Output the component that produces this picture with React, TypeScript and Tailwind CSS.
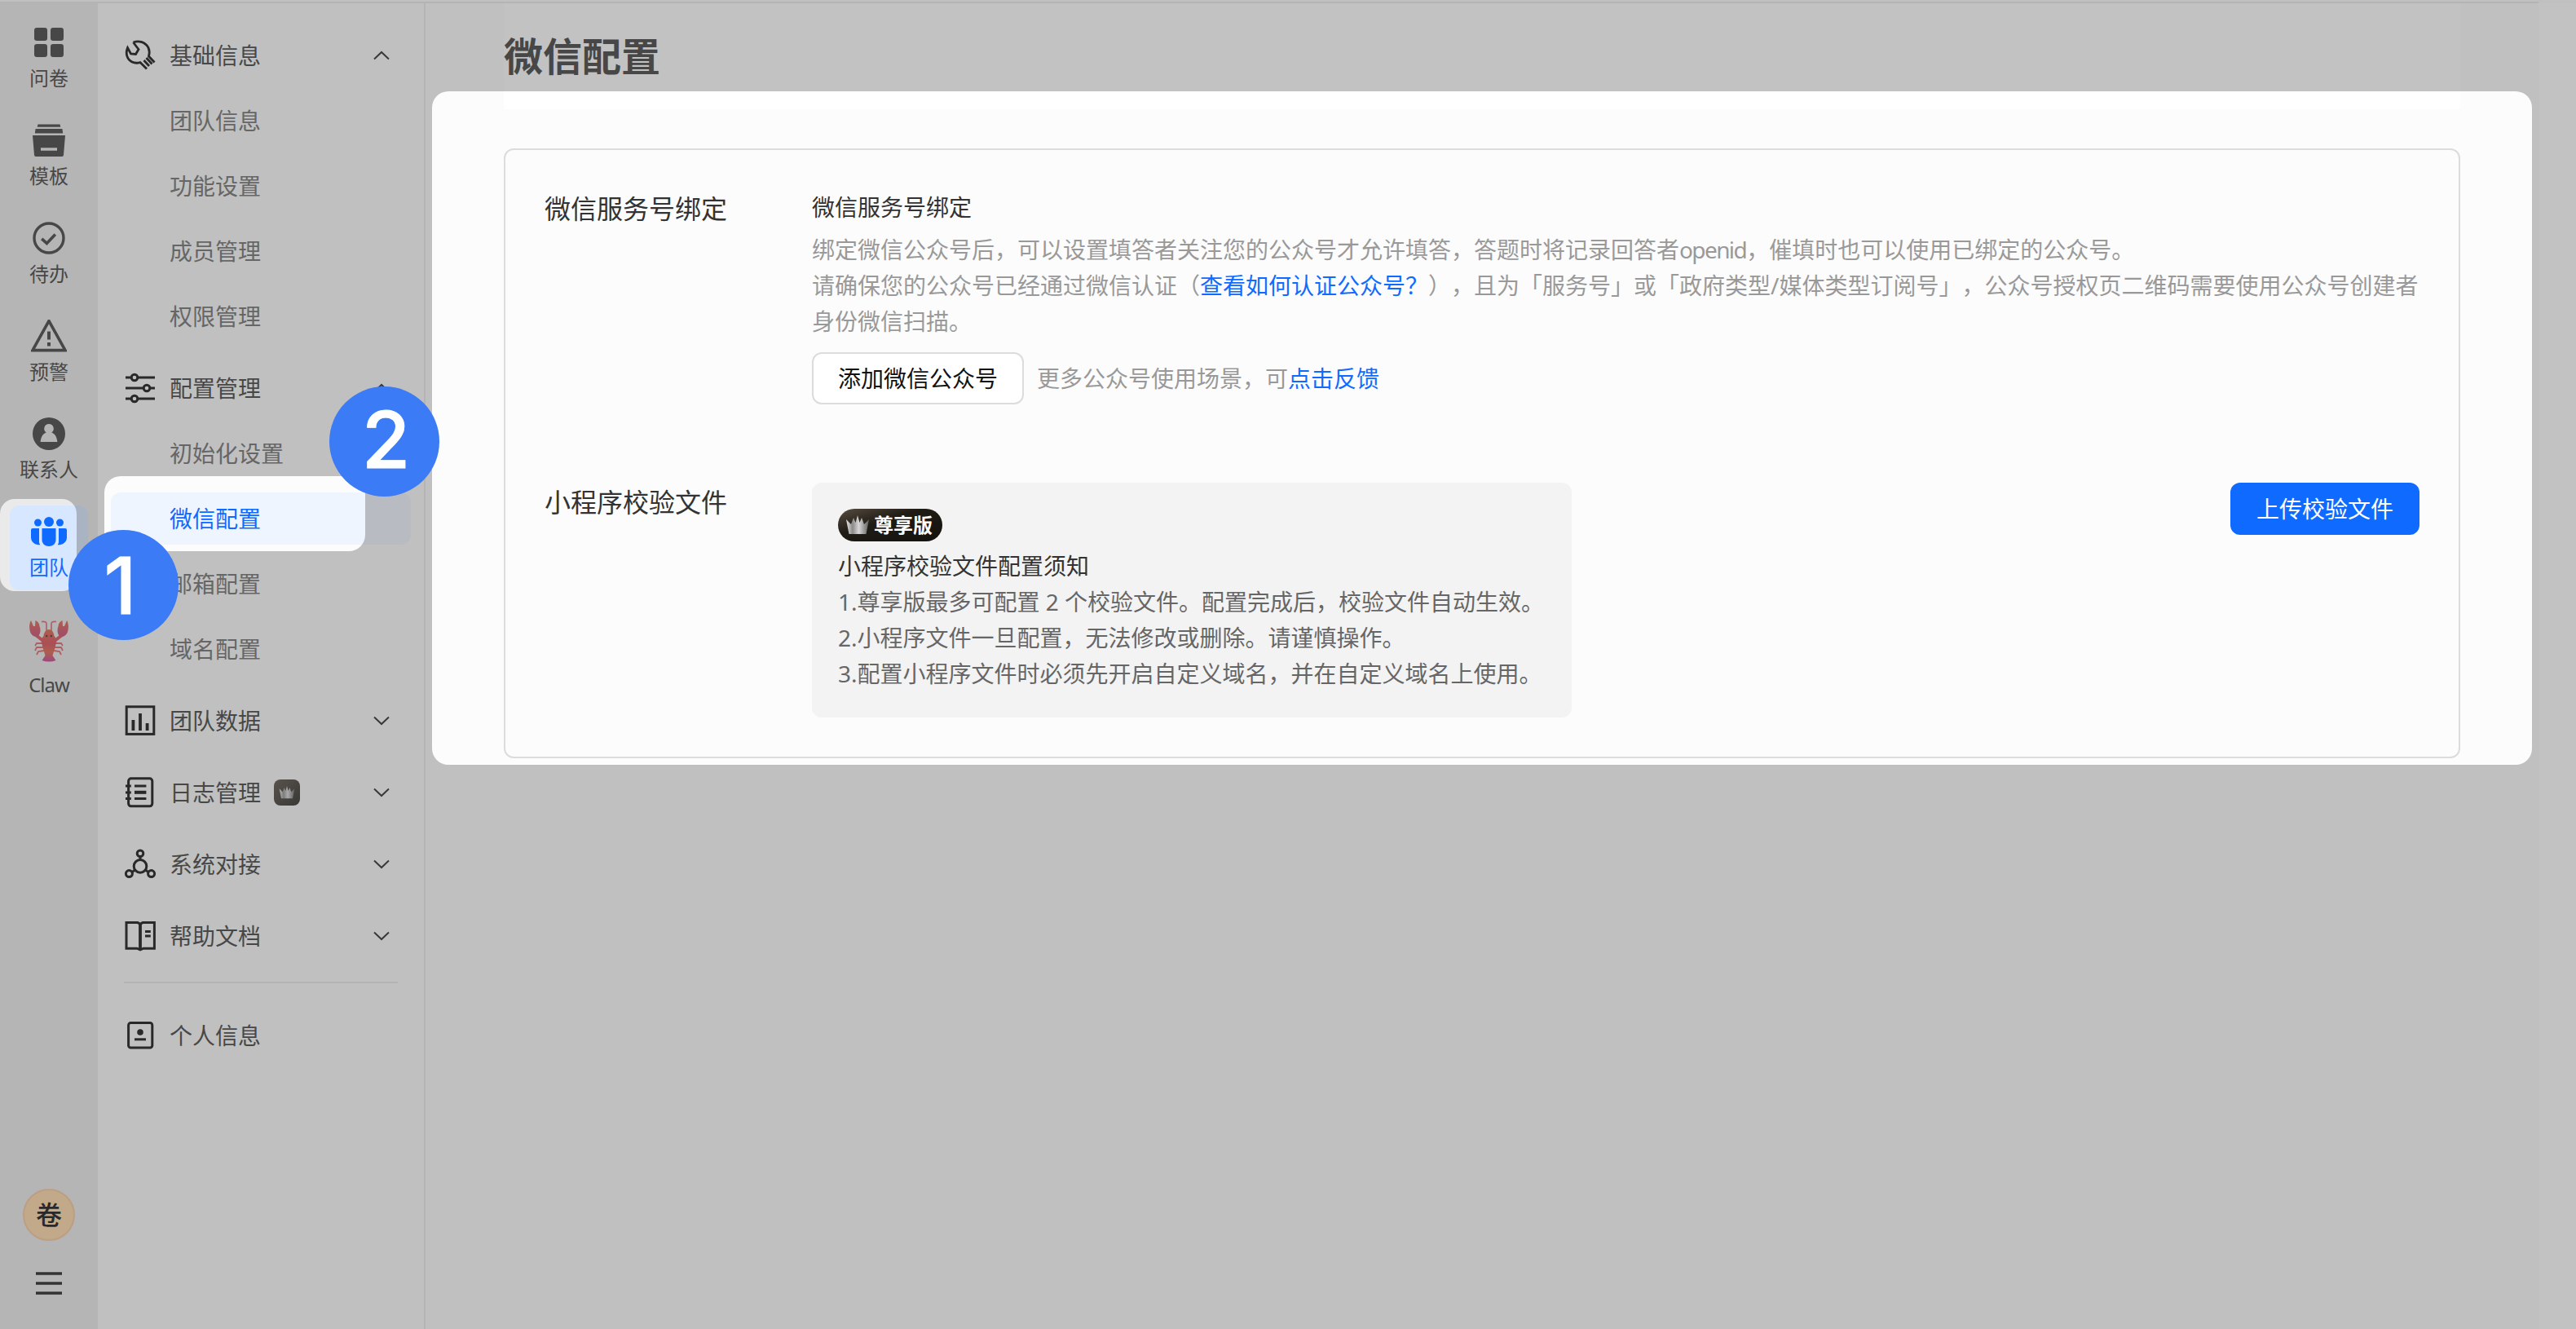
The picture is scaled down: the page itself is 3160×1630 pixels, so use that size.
import type { ReactNode } from 'react';

type MenuGroup = {
  label: string;
  icon: ReactNode;
  open?: boolean;
  vip?: boolean;
  items?: string[];
};

const stroke = {
  fill: 'none',
  stroke: 'currentColor',
  strokeWidth: 1.5,
} as const;

function Icon({ children, className = 'size-10' }: { children: ReactNode; className?: string }) {
  return (
    <svg viewBox="0 0 20 20" className={className}>
      {children}
    </svg>
  );
}

const SurveyIcon = (
  <Icon>
    <rect x="1" y="1" width="8" height="8" rx="1.6" fill="currentColor" />
    <rect x="11" y="1" width="8" height="8" rx="1.6" fill="currentColor" />
    <rect x="1" y="11" width="8" height="8" rx="1.6" fill="currentColor" />
    <rect x="11" y="11" width="8" height="8" rx="1.6" fill="currentColor" />
  </Icon>
);

const TemplateIcon = (
  <Icon>
    <path d="M3.2 0.3h13.6l.3 1.6H2.9z" fill="currentColor" />
    <path d="M1.8 3h16.4l.4 2.8H1.4z" fill="currentColor" />
    <path d="M0 7h20l-1 12a1 1 0 0 1-1 1H2a1 1 0 0 1-1-1zM5 14.6v1.8h10v-1.8z" fillRule="evenodd" fill="currentColor" />
  </Icon>
);

const TodoIcon = (
  <Icon>
    <circle cx="10" cy="10" r="9" {...stroke} strokeWidth="1.7" />
    <path d="M5.6 10.4l3.1 2.8 5.2-5.4" {...stroke} strokeWidth="1.8" />
  </Icon>
);

const AlertIcon = (
  <Icon className="h-10 w-11">
    <path d="M10 0.8L20 18.8H0z" {...stroke} strokeWidth="1.8" />
    <path d="M10 7.2v5M10 14v2.2" {...stroke} strokeWidth="2" />
  </Icon>
);

const ContactIcon = (
  <Icon>
    <path
      d="M10 0a10 10 0 1 0 0 20a10 10 0 1 0 0-20zM10 4a2.9 2.9 0 0 1 1.6 5.3c2 .6 3.3 2.6 3.6 5.7H4.8c.3-3.1 1.6-5.1 3.6-5.7A2.9 2.9 0 0 1 10 4z"
      fillRule="evenodd"
      fill="currentColor"
    />
  </Icon>
);

const TeamIcon = (
  <svg viewBox="0 0 44 40" className="h-10 w-11" fill="currentColor">
    <circle cx="22" cy="8" r="6" />
    <circle cx="8.5" cy="9" r="4.5" />
    <circle cx="35.5" cy="9" r="4.5" />
    <path d="M13.500 16h17v14c0 5-4 8-8.500 8s-8.500-3-8.500-8z" />
    <path d="M2 16h8v17c.3 1.500.8 2.500 1.500 3.300C5 36.500 0 33 0 27v-9a2 2 0 0 1 2-2z" />
    <path d="M42 16h-8v17c-.3 1.500-.8 2.500-1.500 3.300C39 36.500 44 33 44 27v-9a2 2 0 0 0-2-2z" />
  </svg>
);

function LobsterIcon() {
  return (
    <svg viewBox="0 0 48 52" className="h-[52px] w-12">
      <defs>
        <linearGradient id="lobster" x1="0" y1="0" x2="0" y2="1">
          <stop offset="0" stopColor="#dd5a3c" />
          <stop offset="0.45" stopColor="#d8404c" />
          <stop offset="0.7" stopColor="#dd5a3c" />
          <stop offset="1" stopColor="#c03490" />
        </linearGradient>
        <linearGradient id="claw" x1="0" y1="0" x2="0" y2="1">
          <stop offset="0" stopColor="#dd5a3c" />
          <stop offset="1" stopColor="#c83a70" />
        </linearGradient>
      </defs>
      <path d="M21 14V5c0-2-2-3-6-2.500M27 14V5c0-2 2-3 6-2.500" fill="none" stroke="#d65a65" strokeWidth="1.600" />
      <g fill="none" stroke="#dc5a60" strokeWidth="1.800">
        <path d="M18 29H9l-2 3M18 34H9l-2 4M18 38l-7 1-2 4M30 29h9l2 3M30 34h9l2 4M30 38l7 1 2 4" />
      </g>
      <path d="M8 19l9 7M40 19l-9 7" stroke="#d8454a" strokeWidth="4" />
      <path d="M2 1C0 4-.5 10 1 15c2 5 6 7 10 5 3-3 3-8 1.500-12C12 4 10 2 7.500 1L7 8 5 8z" fill="url(#claw)" />
      <path d="M46 1c2 3 2.500 9 1 14-2 5-6 7-10 5-3-3-3-8-1.500-12C36 4 38 2 40.500 1L41 8l2 0z" fill="url(#claw)" />
      <path d="M24 12c4 0 6 4 6.500 8 3 3 3.500 7 2 10-1 6-3 10-4 14l4 6q-8.500 3-17 0l4-6c-1-4-3-8-4-14-1.500-3-1-7 2-10C18 16 20 12 24 12z" fill="url(#lobster)" />
      <circle cx="21.2" cy="20" r="1.2" fill="#3a2020" />
      <circle cx="26.8" cy="20" r="1.2" fill="#3a2020" />
    </svg>
  );
}

const WrenchIcon = (
  <svg viewBox="0 0 40 40" className="size-10" fill="none" stroke="currentColor" strokeWidth="2.8">
    <path d="M11.500 4c7-3 15 0 18.500 6.500 1.500 3.500 1.500 7 .5 10.500l7 7.500M11.500 4l6.500 8.500-3.500 6-6-.5-4-7.500C1.500 18 4 25 10 28c3.500 1.700 7 1.500 10 .5l8 8M24.500 26l6.500 7M27.500 23l7 7.500" />
  </svg>
);

const SlidersIcon = (
  <Icon>
    <path d="M1 3.500h3.500M8.500 3.500h10.500M1 10h11M16 10h3M1 16.500h3.500M8.500 16.500h10.500" {...stroke} strokeWidth="1.600" />
    <circle cx="6.5" cy="3.5" r="1.9" {...stroke} />
    <circle cx="14" cy="10" r="1.9" {...stroke} />
    <circle cx="6.5" cy="16.5" r="1.9" {...stroke} />
  </Icon>
);

const ChartIcon = (
  <Icon>
    <rect x="1.6" y="1.4" width="16.8" height="16.8" {...stroke} />
    <path d="M5.700 9.500v6.500M10 5.500v10.500M14.300 11.500v4.500" {...stroke} strokeWidth="1.900" />
  </Icon>
);

const LogIcon = (
  <Icon>
    <rect x="2.8" y="1.4" width="14.6" height="17" rx="1.6" {...stroke} />
    <path d="M6.500 6h7.200M6.500 13.700h7.200M1 6h3.400M1 10h3.400M1 13.700h3.400" {...stroke} />
    <path d="M6.500 9.900h7.200" {...stroke} strokeWidth="2" />
  </Icon>
);

const LinkIcon = (
  <Icon>
    <circle cx="10" cy="11.2" r="3.9" {...stroke} />
    <circle cx="10" cy="3.4" r="1.9" {...stroke} />
    <circle cx="3.2" cy="15.8" r="2" {...stroke} />
    <circle cx="16.8" cy="15.8" r="2" {...stroke} />
    <path d="M10 5.300v2M5 14.800l1.600-1.200M15 14.800l-1.600-1.200" {...stroke} />
  </Icon>
);

const BookIcon = (
  <Icon>
    <path d="M1.500 1.800H8.500L10 2.600l1.500-.8H18.700V17.600H12L10 18.400 8 17.600H1.500z" {...stroke} />
    <path d="M10 2.500v16" {...stroke} strokeWidth="1.900" />
    <path d="M13 7.200h3.400M13 10h3.400" {...stroke} />
  </Icon>
);

const ProfileIcon = (
  <Icon>
    <rect x="2.8" y="2.3" width="14.6" height="15.2" rx="1.4" {...stroke} />
    <circle cx="10" cy="8" r="1.9" fill="currentColor" />
    <path d="M6.500 12.400h7" {...stroke} />
  </Icon>
);

function Crown({ className }: { className: string }) {
  return (
    <svg viewBox="0 0 28 24" className={className}>
      <defs>
        <linearGradient id="crown">
          <stop offset="0" stopColor="#e8e8e8" />
          <stop offset="0.28" stopColor="#8a8a8a" />
          <stop offset="0.55" stopColor="#d8d8d8" />
          <stop offset="1" stopColor="#5c5c5c" />
        </linearGradient>
      </defs>
      <path d="M0 5l6 6 3-8 2.500 6L14 0l2.500 9L19 3l3 8 6-6-3.500 18h-21z" fill="url(#crown)" />
    </svg>
  );
}

function Chevron({ open }: { open?: boolean }) {
  return (
    <svg viewBox="0 0 20 12" className="h-3 w-5 text-[#1c1c1c]" fill="none" stroke="currentColor" strokeWidth="2">
      <path d={open ? 'M1 10.5L10 2l9 8.5' : 'M1 1.500L10 10l9-8.500'} />
    </svg>
  );
}

const railItems = [
  { label: '问卷', icon: SurveyIcon },
  { label: '模板', icon: TemplateIcon },
  { label: '待办', icon: TodoIcon },
  { label: '预警', icon: AlertIcon },
  { label: '联系人', icon: ContactIcon },
  { label: '团队', icon: TeamIcon, active: true },
];

const groups: MenuGroup[] = [
  { label: '基础信息', icon: WrenchIcon, open: true, items: ['团队信息', '功能设置', '成员管理', '权限管理'] },
  { label: '配置管理', icon: SlidersIcon, open: true, items: ['初始化设置', '微信配置', '邮箱配置', '域名配置'] },
  { label: '团队数据', icon: ChartIcon },
  { label: '日志管理', icon: LogIcon, vip: true },
  { label: '系统对接', icon: LinkIcon },
  { label: '帮助文档', icon: BookIcon },
];

function Rail() {
  return (
    <nav className="flex w-[120px] shrink-0 flex-col items-center bg-[#eaeaea] pt-4 text-2xl text-[#333]">
      <div className="flex flex-col gap-4">
        {railItems.map((item) => (
          <div
            key={item.label}
            className={
              item.active
                ? 'flex h-[104px] w-24 flex-col items-center rounded-xl bg-[#d6e7ff] pt-3 text-[#0f6bff]'
                : 'flex h-[104px] w-24 flex-col items-center pt-3'
            }
          >
            {item.icon}
            <span className="mt-[7px] leading-[34px] whitespace-nowrap">{item.label}</span>
          </div>
        ))}
        <div className="flex w-24 flex-col items-center pt-5">
          <LobsterIcon />
          <span className="mt-2.5 leading-9 tracking-[-1px]">Claw</span>
        </div>
      </div>
      <div className="mt-auto flex size-16 items-center justify-center rounded-full border-2 border-[#f5c496] bg-[#ffd5a2] text-[32px] font-medium text-black">
        卷
      </div>
      <svg viewBox="0 0 32 28" className="mt-[38px] mb-[42px] h-7 w-8" stroke="#111" strokeWidth="3.5">
        <path d="M0 2h32M0 14h32M0 26h32" />
      </svg>
    </nav>
  );
}

function Sidebar() {
  return (
    <aside className="w-[402px] shrink-0 border-r-2 border-[#e8e8e8] px-4 pt-7">
      <div className="flex flex-col gap-4">
        {groups.map((group) => (
          <div key={group.label}>
            <div className="flex h-[72px] items-center px-4 text-[#333]">
              <span className="text-black">{group.icon}</span>
              <span className="ml-4">{group.label}</span>
              {group.vip && (
                <span className="ml-4 flex size-8 items-center justify-center rounded-lg bg-linear-to-br from-[#51473c] to-[#1c1a16]">
                  <Crown className="h-4 w-5" />
                </span>
              )}
              <span className="mr-2.5 ml-auto">
                <Chevron open={group.open} />
              </span>
            </div>
            {group.items && (
              <div className="flex flex-col gap-4 pt-3 pb-1">
                {group.items.map((item) => (
                  <div
                    key={item}
                    className={
                      item === '微信配置'
                        ? 'flex h-16 items-center rounded-xl bg-[#eef5ff] pl-[72px] text-[#0f6bff]'
                        : 'flex h-16 items-center pl-[72px] text-[#666]'
                    }
                  >
                    {item}
                  </div>
                ))}
              </div>
            )}
          </div>
        ))}
      </div>
      <div className="mx-4 mt-5 border-t-2 border-[#e8e8e8]" />
      <div className="mt-7 flex h-[72px] items-center px-4 text-[#333]">
        <span className="text-black">{ProfileIcon}</span>
        <span className="ml-4">个人信息</span>
      </div>
    </aside>
  );
}

function Content() {
  return (
    <main className="min-w-0 flex-1 px-24">
      <h1 className="flex h-[130px] items-start bg-white pt-[31px] text-5xl leading-[68px] font-bold text-[#333]">微信配置</h1>
      <div className="mt-12 flex h-[748px] flex-col rounded-xl border-2 border-[#dcdcdc] px-12 pt-12">
        <section className="flex">
          <h2 className="w-[328px] shrink-0 text-[32px] leading-12 text-[#333]">微信服务号绑定</h2>
          <div className="flex-1 leading-11 whitespace-nowrap text-[#999]">
            <h3 className="text-[#333]">微信服务号绑定</h3>
            <p className="mt-2 [text-spacing-trim:space-all]">
              绑定微信公众号后，可以设置填答者关注您的公众号才允许填答，答题时将记录回答者
              <span className="tracking-[-1.6px]">openid</span>，催填时也可以使用已绑定的公众号。
              <br />
              请确保您的公众号已经通过微信认证（<a className="text-[#0f6bff]">查看如何认证公众号？</a>
              ），且为「服务号」或「政府类型/媒体类型订阅号」，公众号授权页二维码需要使用公众号创建者
              <br />
              身份微信扫描。
            </p>
            <div className="mt-4 flex items-center gap-4">
              <button className="h-16 w-[260px] rounded-xl border-2 border-[#dcdcdc] bg-white text-[#111]">添加微信公众号</button>
              <span>
                更多公众号使用场景，可<a className="text-[#0f6bff]">点击反馈</a>
              </span>
            </div>
          </div>
        </section>
        <section className="mt-24 flex items-start">
          <h2 className="w-[328px] shrink-0 text-[32px] leading-12 text-[#333]">小程序校验文件</h2>
          <div className="w-[932px] rounded-xl bg-[#f3f3f3] p-8 leading-11 whitespace-nowrap text-[#666]">
            <span className="flex h-10 w-32 items-center gap-1.5 rounded-full bg-linear-to-br from-[#5a4f42] via-[#1f1b15] via-40% to-[#14120e] pl-2.5 text-2xl font-bold text-white">
              <Crown className="h-6 w-7" />
              尊享版
            </span>
            <h3 className="mt-2 text-[#333]">小程序校验文件配置须知</h3>
            <p>1.尊享版最多可配置 2 个校验文件。配置完成后，校验文件自动生效。</p>
            <p>2.小程序文件一旦配置，无法修改或删除。请谨慎操作。</p>
            <p>3.配置小程序文件时必须先开启自定义域名，并在自定义域名上使用。</p>
          </div>
          <button className="ml-auto h-16 w-[232px] rounded-xl bg-[#0f6bff] text-white">上传校验文件</button>
        </section>
      </div>
    </main>
  );
}

// Dims everything except the three highlighted areas.
function Spotlight() {
  return (
    <svg viewBox="0 0 3160 1630" className="absolute inset-0 h-[1630px] w-[3160px]">
      <path
        fill="#666"
        fillOpacity="0.4"
        fillRule="evenodd"
        d="M0 0H3160V1630H0z
           M18 612H76a18 18 0 0 1 18 18V707a18 18 0 0 1-18 18H18a18 18 0 0 1-18-18V630a18 18 0 0 1 18-18z
           M148 584H428a20 20 0 0 1 20 20V656a20 20 0 0 1-20 20H148a20 20 0 0 1-20-20V604a20 20 0 0 1 20-20z
           M550 112H3086a20 20 0 0 1 20 20V918a20 20 0 0 1-20 20H550a20 20 0 0 1-20-20V132a20 20 0 0 1 20-20z"
      />
    </svg>
  );
}

const stepClass =
  "absolute flex size-[135px] items-center justify-center rounded-full bg-[#3b7bf6] font-['Inter',sans-serif] text-[96px] leading-none font-medium text-white [-webkit-text-stroke:1px_white]";

export default function App() {
  return (
    <div className="relative flex h-[1630px] w-[3160px] flex-col overflow-hidden bg-[#fcfcfc] font-['Noto_Sans','Noto_Sans_CJK_SC',sans-serif] text-[28px]">
      <div className="mr-[46px] h-1 shrink-0 border-b-2 border-[#e8e8e8]" />
      <div className="flex min-h-0 flex-1">
        <Rail />
        <Sidebar />
        <Content />
        <div className="w-[46px] shrink-0 bg-white" />
      </div>
      <Spotlight />
      <div className={`${stepClass} top-[650px] left-[84px] pr-2`}>1</div>
      <div className={`${stepClass} top-[474px] left-[404px] pb-1.5 pl-1`}>2</div>
    </div>
  );
}
